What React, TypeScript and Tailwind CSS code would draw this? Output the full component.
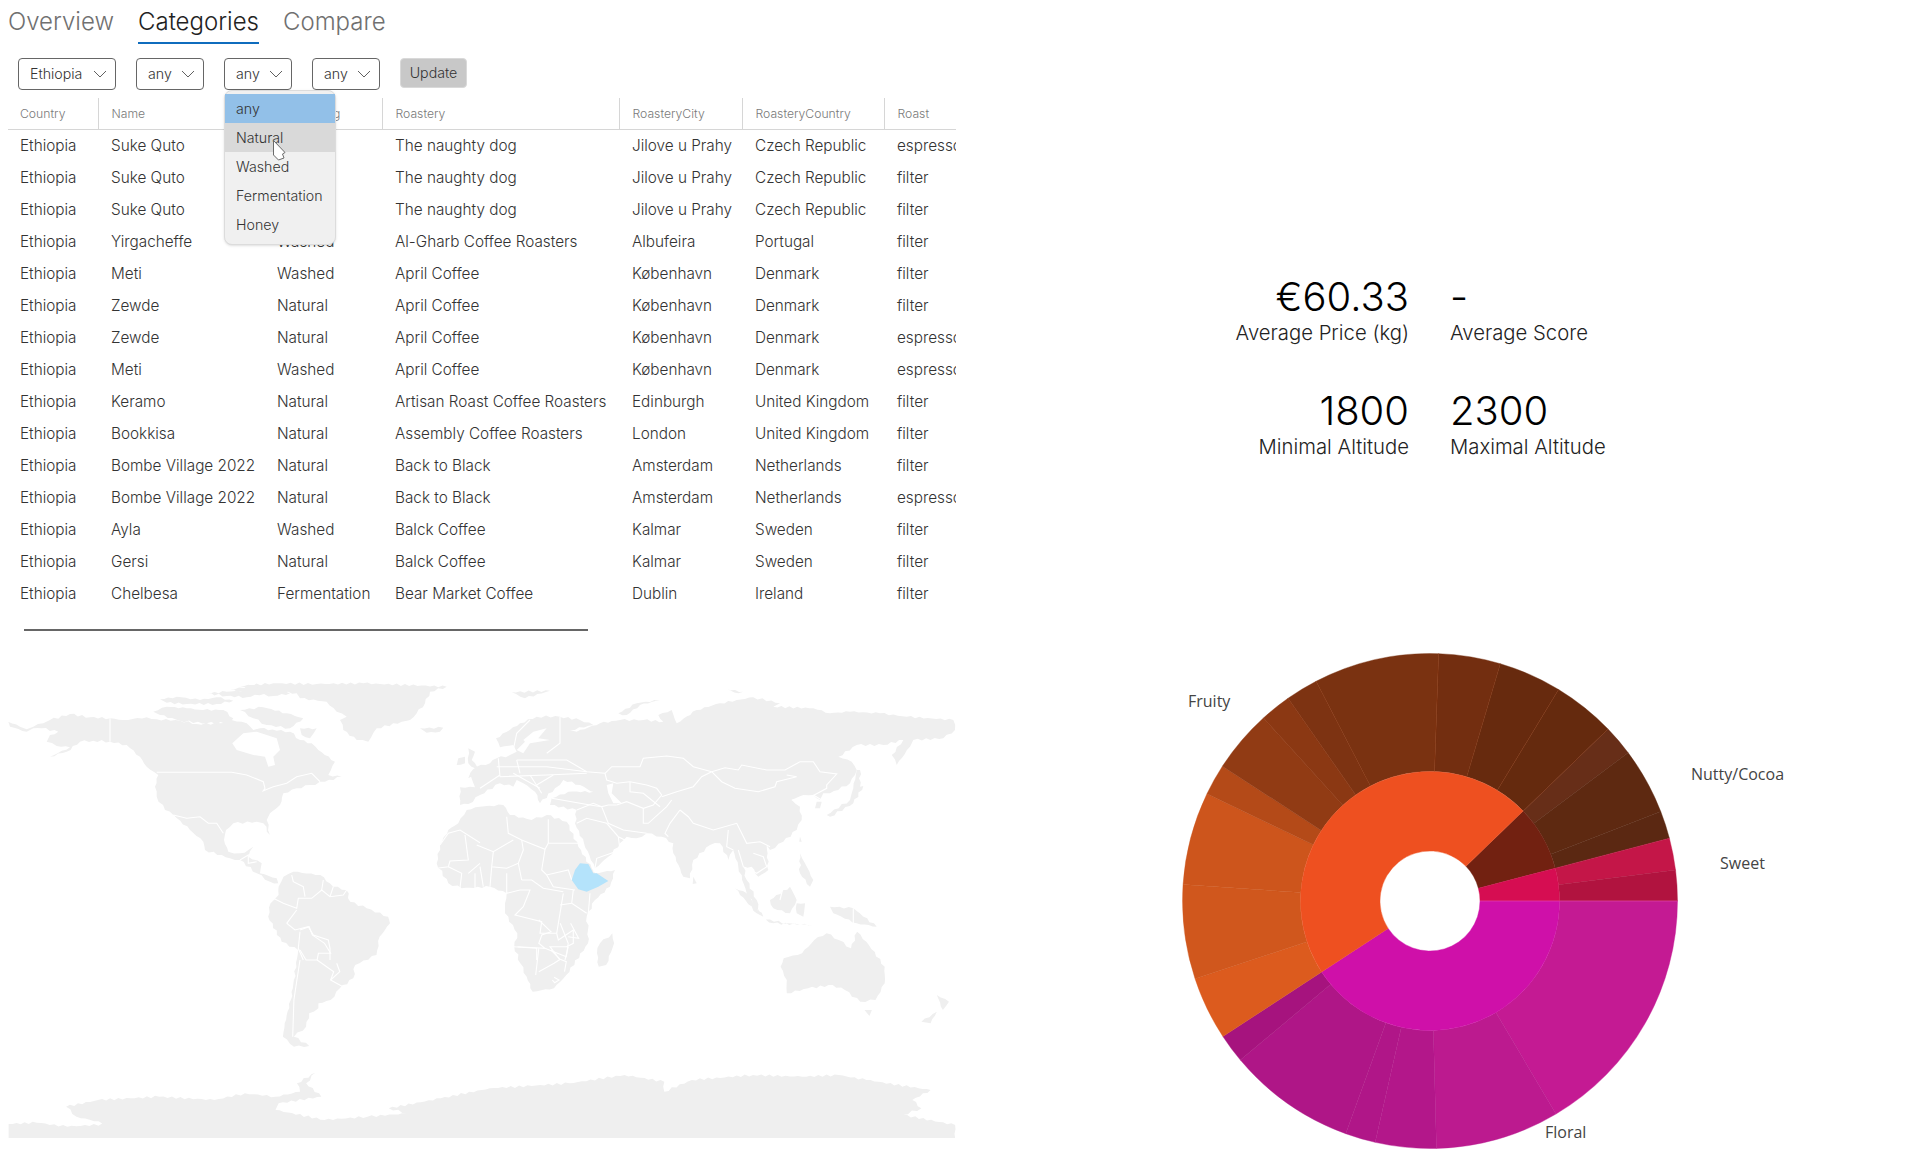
import React from "react";

type Fn = (x: number, y: number) => [number, number];
const z3: Fn = (x, y) => [x / 3, 660 + y / 3];
const z4: Fn = (x, y) => [480 + x / 3, 660 + y / 3];
const z5: Fn = (x, y) => [x / 1.6333, 900 + y / 3];

const path = (fn: Fn, s: string, close = true) => {
  const pts = s.trim().split(/\s+/).map((p) => {
    const [a, b] = p.split(",").map(Number);
    const [x, y] = fn(a, b);
    return `${x.toFixed(1)} ${y.toFixed(1)}`;
  });
  return "M" + pts.join("L") + (close ? "Z" : "");
};

// Coastlines in the picture are jagged, so long straight runs get small deterministic steps.
const coast = (fn: Fn, s: string) => {
  const raw = s.trim().split(/\s+/).map((p) => {
    const [a, b] = p.split(",").map(Number);
    return fn(a, b);
  });
  const out: string[] = [];
  raw.forEach((p, i) => {
    const q = raw[(i + 1) % raw.length];
    const dx = q[0] - p[0], dy = q[1] - p[1];
    const len = Math.hypot(dx, dy);
    const n = Math.max(1, Math.floor(len / 4));
    const flat = p[1] >= 1137 && q[1] >= 1137;
    const edge = Math.abs(dx) < 0.5 && p[0] < 10;
    for (let k = 0; k < n; k++) {
      const t = k / n;
      const w = k === 0 || flat || edge ? 0 : Math.sin(i * 12.9898 + k * 78.233) * 1.1;
      const x = p[0] + dx * t + (-dy / (len || 1)) * w;
      const y = p[1] + dy * t + (dx / (len || 1)) * w;
      out.push(`${x.toFixed(1)} ${y.toFixed(1)}`);
    }
  });
  return "M" + out.join("L") + "Z";
};

const land: [Fn, string][] = [
  // North America
  [z3, "25,185 60,200 80,208 100,200 130,190 150,180 210,162 270,172 330,175 370,180 440,172 470,178 540,182 590,192 660,190 695,180 740,190 760,210 780,205 830,212 870,215 900,240 935,250 955,270 1005,305 985,345 1025,350 975,365 930,375 890,385 850,400 840,435 810,460 800,480 810,525 790,490 770,485 700,490 678,510 672,540 685,575 720,580 745,570 760,560 745,590 785,610 780,640 830,655 835,670 810,665 770,640 720,600 690,595 615,570 610,545 570,510 520,465 495,450 470,410 465,380 475,345 440,320 420,290 380,255 330,245 280,242 240,245 200,275 150,290 210,262 170,258 140,245 150,225 175,215 125,205 100,205 80,215 30,200"],
  // Arctic islands
  [z3, "460,155 500,140 560,145 610,150 670,150 700,175 690,188 620,190 540,182 480,165"],
  [z3, "480,118 530,110 600,120 650,112 700,122 650,132 560,132 500,128"],
  [z3, "620,100 680,95 760,92 790,100 740,112 680,108"],
  [z3, "720,150 790,142 860,160 910,175 870,205 800,195 760,175"],
  [z3, "690,90 760,75 820,80 870,100 820,108 750,100"],
  [z3, "900,205 950,205 930,235 905,225"],
  // Greenland
  [z3, "720,78 820,70 950,72 1090,70 1340,80 1290,95 1275,130 1250,160 1230,180 1130,205 1105,245 1070,240 1030,210 1020,180 1040,170 1010,155 980,125 900,115 890,100 800,90"],
  [z3, "1260,205 1330,203 1320,215 1280,218"],
  // UK & Ireland
  [z3, "1405,265 1425,275 1415,300 1440,330 1440,345 1405,355 1425,325 1405,310"],
  [z3, "1375,295 1395,290 1395,310 1370,315"],
  // South America
  [z5, "455,-40 463,-70 479,-85 523,-75 544,-40 566,-30 572,5 599,25 634,50 637,70 620,110 615,165 580,195 577,235 555,265 540,300 520,310 520,325 505,340 500,380 480,410 505,438 480,440 462,410 465,370 475,300 480,240 487,150 460,125 438,50 442,10 455,-15"],
  // Africa
  [z4, "-40,450 0,440 70,435 90,465 155,480 200,465 260,485 295,560 335,625 345,640 405,630 390,680 345,720 320,770 324,810 324,850 259,945 222,985 158,995 140,950 121,910 103,860 112,820 75,760 75,730 80,700 30,680 -55,685 -95,670 -130,610 -120,555 -95,510 -65,490"],
  [z5, "1000,100 1003,130 990,195 978,200 975,160 980,130"],
  // Eurasia
  [z4, "-60,382 -15,382 -30,340 -10,320 30,310 50,295 90,285 110,275 100,255 60,262 48,235 120,190 170,170 240,170 300,180 340,195 270,210 290,215 360,190 420,180 490,180 550,185 535,165 575,150 590,190 650,150 720,130 820,112 900,130 880,140 1000,145 1050,160 1110,155 1200,160 1280,170 1420,180 1425,210 1390,235 1300,240 1290,260 1250,315 1235,285 1270,240 1210,255 1130,255 1075,290 1115,305 1130,330 1110,370 1050,400 1030,400 1020,420 1000,405 970,405 935,420 960,440 965,480 950,510 910,545 870,570 860,555 865,630 835,650 815,620 790,620 800,660 830,720 840,760 800,700 775,620 760,570 745,600 720,550 690,555 640,600 630,655 610,650 580,580 580,550 545,530 500,520 470,535 440,530 385,590 345,625 312,550 285,490 290,450 210,435 215,415 265,395 340,395 365,410 300,375 250,360 225,385 180,430 165,395 130,370 110,360 100,380 60,370 0,405 -35,432 -60,435"],
  // Arctic Russia
  [z4, "95,97 210,92 135,115"],
  [z4, "415,160 470,130 550,118 480,135 440,165"],
  [z4, "740,88 790,95 775,100"],
  // Japan
  [z4, "1040,465 1110,420 1120,385 1130,330 1140,330 1140,380 1150,378 1120,430 1050,470"],
  [z4, "1010,425 1025,425 1020,445 1005,445"],
  [z4, "640,650 650,670 638,672"],
  // SE Asia
  [z4, "765,685 800,700 850,770 830,760"],
  [z4, "845,775 920,790 1000,795 880,790"],
  [z4, "870,720 930,680 950,720 930,760 880,745"],
  [z4, "950,730 975,730 970,770 950,760"],
  [z4, "960,580 975,610 1000,660 990,680 960,640"],
  [z4, "1050,740 1120,745 1190,800 1130,790 1060,760"],
  [z4, "960,530 965,545 958,545"],
  // Oceania
  [z5, "1275,200 1280,175 1310,160 1330,120 1350,100 1370,120 1390,145 1400,95 1415,125 1445,200 1445,250 1430,300 1405,305 1380,270 1360,255 1320,265 1285,280 1285,240"],
  [z5, "1412,330 1424,330 1420,348"],
  [z5, "1530,285 1550,305 1540,330"],
  [z5, "1530,335 1505,365 1520,370"],
  // Antarctica
  [z5, "14,672 60,668 110,680 175,672 125,650 108,620 160,600 260,590 350,600 400,580 450,590 490,575 485,550 515,518 500,550 525,590 455,610 450,630 530,660 600,650 665,640 635,625 720,595 800,565 930,550 1020,525 1085,545 1085,575 1130,540 1230,525 1310,530 1370,525 1415,540 1520,570 1490,600 1505,625 1475,645 1560,675 1560,714 14,714"],
];

const waters: [Fn, string][] = [
  [z3, "697,250 730,220 770,215 830,235 840,270 820,290 825,315 805,320 795,290 760,285 710,270"],
  [z4, "130,240 160,215 200,205 175,235 210,240 150,250 130,280 110,270 135,245"],
  [z4, "380,375 400,370 395,400 425,430 400,430 385,400"],
];

const borders: [Fn, string][] = [
  [z3, "330,175 330,245"],
  [z3, "470,337 695,337 740,345 790,365 795,385 790,392 820,380 860,370 890,350 935,340 960,365"],
  [z3, "520,465 560,475 600,470 625,490 650,490 670,520"],
  [z3, "520,465 575,540"],
  [z3, "720,600 745,585 745,610 770,605"],
  [z3, "820,715 850,730 890,745 895,715 935,715 965,690 990,710 1030,705 1040,690"],
  [z3, "875,645 880,665 910,680 915,710"],
  [z3, "860,790 890,750"],
  [z3, "860,790 885,810 925,800 940,825 985,840 990,865 990,900"],
  [z3, "900,815 895,865 910,900"],
  [z3, "965,690 970,660"],
  [z3, "1000,680 990,710"],
  [z3, "1320,555 1345,520 1380,510 1440,548"],
  [z3, "1395,525 1405,600 1350,603 1345,620 1310,625"],
  [z3, "1345,620 1385,640 1380,685"],
  [z3, "1405,640 1440,610"],
  [z3, "1425,640 1425,685"],
  [z5, "490,90 505,80 510,105 530,130 540,160 520,160 518,180 500,180 490,150"],
  [z5, "518,180 545,215 540,240 560,260"],
  [z5, "550,190 555,215 540,240"],
  [z5, "490,180 485,240 480,300 478,410"],
  [z4, "205,478 205,550 295,550"],
  [z4, "80,470 85,520 125,540 195,568 205,550"],
  [z4, "-10,555 40,575 100,540"],
  [z4, "40,575 35,620 80,625 115,610"],
  [z4, "195,568 185,630 200,645 265,630 275,660"],
  [z4, "125,540 130,570 115,610 125,660"],
  [z4, "200,645 220,680 285,690"],
  [z4, "125,660 155,660 190,685 250,695"],
  [z4, "120,690 150,690 130,740 105,765 185,785 180,820 230,820 240,760 250,700"],
  [z4, "280,690 275,730 320,760"],
  [z4, "240,735 275,730"],
  [z4, "80,640 80,700 120,690"],
  [z4, "0,620 10,680"],
  [z4, "35,620 30,680"],
  [z4, "330,700 325,760"],
  [z4, "340,635 370,630"],
  [z4, "100,860 170,865 170,900"],
  [z4, "230,820 235,840 280,810 280,850 260,860 210,860 240,900"],
  [z4, "255,900 265,860"],
  [z4, "375,340 395,320 480,320 490,295 560,288 610,295 640,320 695,335"],
  [z4, "695,335 735,323 775,330 785,315 860,330 915,330 960,305 1000,305 1020,335 1070,342 1040,375 1040,385 985,415 935,420"],
  [z4, "695,335 725,365 765,385 835,395 885,380 890,365 950,350 920,345"],
  [z4, "695,335 665,350 640,380 590,395 545,410"],
  [z4, "450,365 500,375 530,385 545,405 520,435 490,445 440,425 410,435"],
  [z4, "450,365 450,395 490,400 540,440"],
  [z4, "375,340 380,360 410,370 450,365"],
  [z4, "410,435 385,435 365,440 385,490 430,510 500,520"],
  [z4, "490,445 490,490 505,490 560,440 575,420"],
  [z4, "600,450 570,490 555,520 565,530"],
  [z4, "600,450 625,470 640,490 700,510 770,490 785,520 800,550 840,545 870,560"],
  [z4, "745,510 740,560 760,570"],
  [z4, "775,570 790,620 830,640 860,620 850,590 820,580"],
  [z4, "1000,405 1025,420"],
  [z4, "290,490 320,475 380,490 415,530 445,545"],
  [z4, "345,625 350,595 415,572 425,590"],
  [z4, "415,530 420,570"],
  [z4, "365,440 340,430 290,450"],
  [z4, "215,415 330,435 365,440"],
  [z4, "50,320 200,320 320,335 375,340"],
  [z4, "60,350 200,345 320,340"],
  [z4, "110,300 260,300 320,335"],
  [z4, "200,280 240,250 240,170"],
  [z4, "100,270 110,220 150,180"],
  [z4, "100,340 180,385"],
  [z4, "150,345 185,400"],
  [z4, "220,345 170,375"],
  [z4, "55,295 60,350"],
  [z4, "0,385 60,345"],
  [z4, "110,300 120,340"],
  [z4, "1120,745 1120,790"],
  [z4, "910,680 900,720"],
  [z5, "880,60 900,95 885,105 880,130 890,145 845,140"],
  [z5, "880,145 875,225"],
  [z5, "890,145 925,170 928,130 915,70"],
  [z5, "900,150 915,178 905,190 880,215"],
  [z5, "915,178 925,185 922,215"],
  [z5, "905,232 913,240 906,248 902,240"],
  [z5, "928,110 945,115 932,70"],
];

const ethiopia = path(z4, "275,660 285,630 300,610 325,612 340,640 350,640 385,663 355,680 320,695 295,688");

const WorldMap = () => (
  <svg viewBox="8 680 949 458" className="block w-[949px] h-[458px]">
    {land.map(([f, s], i) => <path key={i} d={coast(f, s)} fill="#efefef" />)}
    {waters.map(([f, s], i) => <path key={i} d={path(f, s)} fill="#ffffff" />)}
    {borders.map(([f, s], i) => <path key={i} d={path(f, s, false)} fill="none" stroke="#ffffff" strokeWidth={1.1} />)}
    <path d={ethiopia} fill="#b4e3fb" />
  </svg>
);

const CX = 1430, CY = 901;
const wedge = (a0: number, a1: number, r0: number, r1: number) => {
  const pt = (a: number, r: number) => {
    const t = (a * Math.PI) / 180;
    return `${(CX + r * Math.sin(t)).toFixed(2)} ${(CY - r * Math.cos(t)).toFixed(2)}`;
  };
  const large = a1 - a0 > 180 ? 1 : 0;
  return `M${pt(a0, r0)}A${r0} ${r0} 0 ${large} 1 ${pt(a1, r0)}L${pt(a1, r1)}A${r1} ${r1} 0 ${large} 0 ${pt(a0, r1)}Z`;
};
const radial = (a: number, r0: number, r1: number) => {
  const t = (a * Math.PI) / 180;
  return `M${CX + r0 * Math.sin(t)} ${CY - r0 * Math.cos(t)}L${CX + r1 * Math.sin(t)} ${CY - r1 * Math.cos(t)}`;
};

const R0 = 50, R1 = 129.5, R2 = 247.5;

const inner: [number, number, string][] = [
  [46, 75.3, "#722111"],
  [75.3, 90, "#d60d52"],
  [90, 236.8, "#cf10a9"],
  [236.8, 406, "#ee5020"],
];
const outer: [number, number, string][] = [
  [2, 16.5, "#732e10"],
  [16.5, 31.3, "#672a0e"],
  [31.3, 46, "#652a0e"],
  [46, 53.2, "#672e18"],
  [53.2, 68.8, "#5e2911"],
  [68.8, 75.3, "#5b2812"],
  [75.3, 82.8, "#c41648"],
  [82.8, 90, "#b1133f"],
  [90, 149.4, "#c41a93"],
  [149.4, 178.5, "#bc1a8f"],
  [178.5, 192.8, "#b3178a"],
  [192.8, 199.9, "#b01688"],
  [199.9, 230, "#af1687"],
  [230, 236.8, "#a6137e"],
  [236.8, 251.7, "#dc5b1e"],
  [251.7, 273.8, "#d0571d"],
  [273.8, 295.7, "#cd551c"],
  [295.7, 303, "#b44a18"],
  [303, 317.7, "#913b14"],
  [317.7, 325, "#8b3813"],
  [325, 332.6, "#7d3312"],
  [332.6, 362, "#7a3211"],
];
const faint = [2, 16.5, 31.3, 46, 317.7, 325, 332.6];

const Sunburst = () => (
  <svg viewBox="956 640 948 520" className="block w-[948px] h-[520px]">
    {outer.map(([a, b, c], i) => <path key={i} d={wedge(a, b, R1, R2)} fill={c} stroke={c} strokeWidth={0.4} />)}
    {faint.map((a) => <path key={a} d={radial(a, R1, R2)} stroke="#9a4018" strokeWidth={0.6} opacity={0.6} />)}
    {inner.map(([a, b, c], i) => <path key={i} d={wedge(a, b, R0, R1)} fill={c} stroke={c} strokeWidth={0.4} />)}
    <path d={radial(90, R0, R2)} stroke="#f060b0" strokeWidth={0.7} opacity={0.7} />
    <g fontFamily="'Open Sans', sans-serif" fontSize="16" fill="#444444">
      <text x="1188" y="707">Fruity</text>
      <text x="1691" y="780">Nutty/Cocoa</text>
      <text x="1720" y="869">Sweet</text>
      <text x="1545" y="1138">Floral</text>
    </g>
  </svg>
);

const Chevron = () => (
  <svg width="14" height="8" viewBox="0 0 14 8" className="shrink-0">
    <polyline points="1,1 7,7 13,1" fill="none" stroke="#616161" strokeWidth="1" />
  </svg>
);

const Select = ({ label, w }: { label: string; w: string }) => (
  <div className={`h-8 ${w} flex items-center justify-between pl-[11px] pr-2 border border-[#666666] rounded text-[14.2px] text-[#333333] font-[350]`}>
    <span>{label}</span>
    <Chevron />
  </div>
);

const rows = [
  ["Suke Quto", "Washed", "The naughty dog", "Jilove u Prahy", "Czech Republic", "espresso"],
  ["Suke Quto", "Washed", "The naughty dog", "Jilove u Prahy", "Czech Republic", "filter"],
  ["Suke Quto", "Washed", "The naughty dog", "Jilove u Prahy", "Czech Republic", "filter"],
  ["Yirgacheffe", "Washed", "Al-Gharb Coffee Roasters", "Albufeira", "Portugal", "filter"],
  ["Meti", "Washed", "April Coffee", "København", "Denmark", "filter"],
  ["Zewde", "Natural", "April Coffee", "København", "Denmark", "filter"],
  ["Zewde", "Natural", "April Coffee", "København", "Denmark", "espresso"],
  ["Meti", "Washed", "April Coffee", "København", "Denmark", "espresso"],
  ["Keramo", "Natural", "Artisan Roast Coffee Roasters", "Edinburgh", "United Kingdom", "filter"],
  ["Bookkisa", "Natural", "Assembly Coffee Roasters", "London", "United Kingdom", "filter"],
  ["Bombe Village 2022", "Natural", "Back to Black", "Amsterdam", "Netherlands", "filter"],
  ["Bombe Village 2022", "Natural", "Back to Black", "Amsterdam", "Netherlands", "espresso"],
  ["Ayla", "Washed", "Balck Coffee", "Kalmar", "Sweden", "filter"],
  ["Gersi", "Natural", "Balck Coffee", "Kalmar", "Sweden", "filter"],
  ["Chelbesa", "Fermentation", "Bear Market Coffee", "Dublin", "Ireland", "filter"],
];

const headers = ["Country", "Name", "Processing", "Roastery", "RoasteryCity", "RoasteryCountry", "Roast"];
const widths = ["w-[90px]", "w-[167px]", "w-[117px]", "w-[237px]", "w-[123px]", "w-[142px]", "w-[72px]"];

const Stat = ({ value, label, right }: { value: string; label: string; right?: boolean }) => (
  <div className={`flex flex-col ${right ? "items-end" : "items-start"}`}>
    <div className="text-[40px] leading-[48px] font-light text-black">{value}</div>
    <div className="text-[20.3px] leading-[24px] font-light text-[#222222]">{label}</div>
  </div>
);

export default function App() {
  return (
    <div className="font-['Inter',sans-serif] w-[1912px] h-[1165px] overflow-hidden bg-white flex pl-2">
      <div className="w-[948px] shrink-0 relative">
        <div className="flex gap-[24px] h-[44px] text-[24px] font-light leading-[44px]">
          <span className="text-[#707070]">Overview</span>
          <span className="relative text-[#222222]">
            Categories
            <span className="absolute left-0 right-0 bottom-0 h-[2px] bg-[#0f6cbd]" />
          </span>
          <span className="text-[#707070]">Compare</span>
        </div>

        <div className="flex items-start mt-[14px] pl-[10px] gap-5">
          <Select label="Ethiopia" w="w-[98px]" />
          <Select label="any" w="w-[68px]" />
          <Select label="any" w="w-[68px]" />
          <Select label="any" w="w-[68px]" />
          <div className="h-[30px] w-[67px] flex items-center justify-center rounded bg-[#c8c8c8] border border-[#d9d9d9] text-[14.2px] text-[#333333] font-[350]">Update</div>
        </div>

        <div className="w-[948px] overflow-hidden mt-2">
          <table className="table-fixed border-collapse w-[948px]">
            <colgroup>
              {widths.map((w, i) => <col key={i} className={w} />)}
            </colgroup>
            <thead>
              <tr className="h-[31px] border-b border-[#d6d6d6]">
                {headers.map((h, i) => (
                  <th key={h} className={`p-0 pt-[2px] ${i === 0 ? "pl-3" : i === 2 ? "pl-3 border-l border-[#d6d6d6]" : "pl-[13px] border-l border-[#d6d6d6]"} text-left font-[350] text-[12.2px] text-[#7a7a7a]`}>{h}</th>
                ))}
              </tr>
            </thead>
            <tbody>
              {rows.map((r, i) => (
                <tr key={i} className="h-8 text-[15.3px] font-[350] text-[#333333]">
                  <td className="p-0 pl-3 pt-[2px] whitespace-nowrap">Ethiopia</td>
                  {r.map((c, j) => (
                    <td key={j} className={`p-0 ${j === 1 ? "pl-3" : "pl-[13px]"} pt-[2px] whitespace-nowrap overflow-hidden`}>{c}</td>
                  ))}
                </tr>
              ))}
            </tbody>
          </table>
        </div>

        <div className="ml-4 mt-5 w-[564px] h-[2px] bg-[#666666]" />

        <div className="mt-[49px]">
          <WorldMap />
        </div>

        <div className="absolute left-[216px] top-[90px] w-[112px] h-[155px] rounded-lg bg-[#f0f0f0] border border-[#dcdcdc] pt-[3px] text-[14.2px] font-[350] text-[#333333] shadow-sm">
          <div className="h-[29px] pl-[11px] flex items-center bg-[#92c0e8]">any</div>
          <div className="h-[29px] pl-[11px] flex items-center bg-[#d9d9d9]">Natural</div>
          <div className="h-[29px] pl-[11px] flex items-center">Washed</div>
          <div className="h-[29px] pl-[11px] flex items-center">Fermentation</div>
          <div className="h-[29px] pl-[11px] flex items-center">Honey</div>
        </div>

        <svg className="absolute left-[264px] top-[139px]" width="14" height="22" viewBox="0 0 14 22">
          <path d="M1.5 1.5 L13 13.5 L10.5 15 L12 19 L6.5 21 L1.5 16 Z" fill="#ffffff" stroke="#6b6b6b" strokeWidth="1" />
        </svg>
      </div>

      <div className="w-[948px] shrink-0 flex flex-col">
        <div className="mt-[273px] grid grid-cols-[453px_1fr] gap-x-[41px] gap-y-[42px]">
          <Stat value="€60.33" label="Average Price (kg)" right />
          <Stat value="-" label="Average Score" />
          <Stat value="1800" label="Minimal Altitude" right />
          <Stat value="2300" label="Maximal Altitude" />
        </div>
        <div className="mt-[181px]">
          <Sunburst />
        </div>
      </div>
    </div>
  );
}
